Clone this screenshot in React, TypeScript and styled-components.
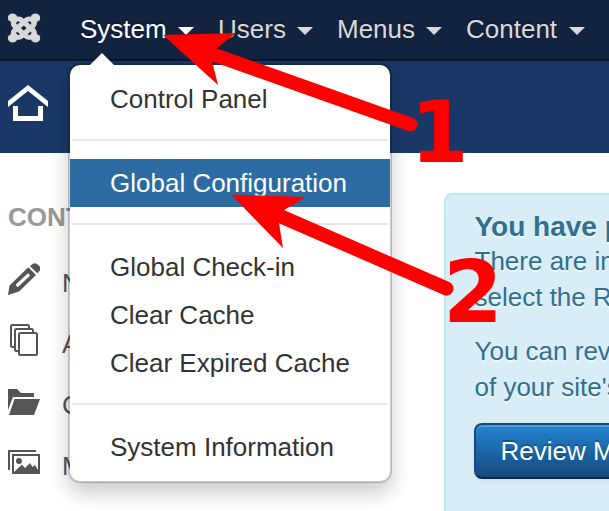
import React from 'react';
import styled, { createGlobalStyle } from 'styled-components';
import { FaJoomla } from 'react-icons/fa';

const GlobalStyle = createGlobalStyle`
  * { box-sizing: border-box; }
  body {
    margin: 0;
    background: #fff;
    overflow: hidden;
    font: 26px/36px "Liberation Sans", Arial, sans-serif;
    color: #333;
  }
`;

const Page = styled.div`
  position: relative;
  width: 609px;
  height: 511px;
  overflow: hidden;
  white-space: nowrap;
`;

const NavBar = styled.nav`
  display: flex;
  align-items: flex-start;
  height: 61px;
  padding-left: 8px;
  background: #12233f;
  border-bottom: 2px solid #0b182c;
`;

const Logo = styled.div`
  width: 32px;
  height: 32px;
  margin: 12px 40px 0 0;
  color: #d9d9d9;
  svg {
    display: block;
    overflow: visible;
    transform: scaleX(1.12);
    stroke-width: 15px;
  }
`;

const NavItem = styled.a<{ $open?: boolean; $width: number }>`
  position: relative;
  display: flex;
  flex: none;
  width: ${(p) => p.$width}px;
  padding-top: 11px;
  color: ${(p) => (p.$open ? '#fff' : '#d9d9d9')};
  text-shadow: 0 -2px 0 rgba(0, 0, 0, 0.25);
`;

const Caret = styled.span<{ $gap?: number }>`
  width: 0;
  height: 0;
  margin: 16px 0 0 ${(p) => p.$gap ?? 11}px;
  border: 8px solid transparent;
  border-top-color: currentColor;
  border-bottom: 0;
`;

const Menu = styled.div`
  position: absolute;
  z-index: 2;
  top: 63px;
  left: -12px;
  width: 324px;
  padding: 10px 0;
  background: #fff;
  background-clip: padding-box;
  border: 2px solid rgba(0, 0, 0, 0.2);
  border-radius: 12px;
  box-shadow: 0 10px 20px rgba(0, 0, 0, 0.2);
  text-shadow: none;

  &::before {
    content: '';
    position: absolute;
    top: -12px;
    left: 20px;
    border: 12px solid transparent;
    border-top: 0;
    border-bottom-color: #fff;
  }
`;

const MenuItem = styled.div<{ $active?: boolean }>`
  height: 48px;
  padding: 6px 40px;
  color: ${(p) => (p.$active ? '#fff' : '#333')};
  background: ${(p) => (p.$active ? '#2d6ca2' : 'transparent')};
`;

const Divider = styled.div`
  height: 2px;
  margin: 16px 2px 18px;
  background: #e5e5e5;
`;

const SubHeader = styled.header`
  height: 92px;
  padding: 24px 0 0 8px;
  background: #1a3867;
  svg { display: block; }
`;

const Body = styled.main`
  display: flex;
  padding-top: 40px;
`;

const Sidebar = styled.aside`
  flex: none;
  width: 444px;
  padding: 6px 0 0 8px;
`;

const SidebarTitle = styled.h2`
  margin: 0 0 28px;
  font-size: 26px;
  line-height: 36px;
  color: #999;
`;

const SideLink = styled.div`
  display: flex;
  height: 61px;
  color: #555;
  svg { flex: none; margin-right: 22px; }
`;

const LinkText = styled.span`
  padding-top: 2px;
`;

const Alert = styled.section`
  flex: none;
  width: 700px;
  height: 330px;
  padding: 14px 28px;
  color: #31708f;
  background: #d9edf7;
  border: 2px solid #bce8f1;
  border-radius: 8px;
  text-shadow: 0 2px 0 rgba(255, 255, 255, 0.5);
`;

const AlertTitle = styled.h4`
  margin: 0 0 -2px 0.5px;
  font-size: 28px;
  line-height: 36px;
`;

const Paragraph = styled.p`
  margin: 0 0 18px 0.5px;
`;

const Button = styled.button`
  display: block;
  height: 56px;
  padding: 0 24.5px;
  font: inherit;
  color: #fff;
  background: linear-gradient(#2384d3, #15497c);
  border: 2px solid;
  border-color: #15497c #15497c #0b2744;
  border-radius: 8px;
  box-shadow: inset 0 2px 0 rgba(255, 255, 255, 0.2), 0 2px 4px rgba(0, 0, 0, 0.05);
  text-shadow: 0 -2px 0 rgba(0, 0, 0, 0.25);
`;

const Annotations = styled.svg`
  position: absolute;
  z-index: 5;
  top: 0;
  left: 0;
  fill: #f00;
  stroke: #f00;
`;

const StepNumber = styled.text`
  stroke: none;
  font: bold 86px "DejaVu Sans", sans-serif;
`;

const HomeIcon = () => (
  <svg width="40" height="36" viewBox="0 0 40 36" fill="#fff">
    <path d="M20 0 40 16V22L20 6 0 22V16Z" />
    <path d="M5 21h5v10h20V21h5v15H5Z" />
  </svg>
);

const PencilIcon = () => (
  <svg width="32" height="34" viewBox="0 0 32 34" fill="#555">
    <path d="M23 2.3Q26.5-1.4 30.3 2T31 8.5L29.3 10.2 22 3.2Z" />
    <path d="M20.3 4.3 28 12 11 28.5 0 32 1.5 22.5ZM20 10.2 7.5 21.7 9.7 24.2 22.2 12.5Z" fillRule="evenodd" />
  </svg>
);

const CopyIcon = () => (
  <svg width="32" height="34" viewBox="0 0 32 34" fill="#fff" stroke="#555" strokeWidth="2">
    <rect x="3" y="1" width="18" height="22" rx="1.5" />
    <rect x="7" y="5" width="18" height="22" rx="1.5" />
    <rect x="11" y="9" width="18" height="22" rx="1.5" />
  </svg>
);

const FolderIcon = () => (
  <svg width="32" height="34" viewBox="0 0 32 34" fill="#555">
    <path d="M0 4H9L13 8H26V12H5L0 25Z" />
    <path d="M6.5 14H32L26 30H1Z" />
  </svg>
);

const PictureIcon = () => (
  <svg width="32" height="34" viewBox="0 0 32 34" fill="#555">
    <path d="M0 4H28V6H2V24H0Z" />
    <path d="M4 8H32V28H4ZM6 10V26L14 18.5 17 22 22 17 24.5 21 27 19 30 24V10Z" fillRule="evenodd" />
    <circle cx="11" cy="15" r="3" />
  </svg>
);

export default function App() {
  return (
    <>
      <GlobalStyle />
      <Page>
        <NavBar>
          <Logo><FaJoomla size={32} /></Logo>
          <NavItem $open $width={138}>
            System <Caret />
            <Menu>
              <MenuItem>Control Panel</MenuItem>
              <Divider />
              <MenuItem $active>Global Configuration</MenuItem>
              <Divider />
              <MenuItem>Global Check-in</MenuItem>
              <MenuItem>Clear Cache</MenuItem>
              <MenuItem>Clear Expired Cache</MenuItem>
              <Divider />
              <MenuItem>System Information</MenuItem>
            </Menu>
          </NavItem>
          <NavItem $width={119}>Users <Caret /></NavItem>
          <NavItem $width={129}>Menus <Caret /></NavItem>
          <NavItem $width={140}>Content <Caret $gap={11.5} /></NavItem>
        </NavBar>
        <SubHeader><HomeIcon /></SubHeader>
        <Body>
          <Sidebar>
            <SidebarTitle>CONTENT</SidebarTitle>
            <SideLink><PencilIcon /><LinkText>New Article</LinkText></SideLink>
            <SideLink><CopyIcon /><LinkText>Articles</LinkText></SideLink>
            <SideLink><FolderIcon /><LinkText>Categories</LinkText></SideLink>
            <SideLink><PictureIcon /><LinkText>Media</LinkText></SideLink>
          </Sidebar>
          <Alert>
            <AlertTitle>You have post-installation messages</AlertTitle>
            <Paragraph>
              There are important messages<br />select the Review Messages button
            </Paragraph>
            <Paragraph>
              You can review the messages<br />of your site's Administrator
            </Paragraph>
            <Button>Review Messages</Button>
          </Alert>
        </Body>
        <Annotations width="609" height="511" viewBox="0 0 609 511">
          <path stroke="none" d="M163 35 236 33 217 48 212 61 218 85Z" />
          <path d="M212 54 410.5 124.5" strokeWidth="14" strokeLinecap="round" />
          <path stroke="none" d="M231 194.5 306 197 284 210 279 223 283 248Z" />
          <path d="M280 216 446.5 288.5" strokeWidth="14" strokeLinecap="round" />
          <StepNumber transform="translate(410.5 162) scale(0.97 1)">1</StepNumber>
          <StepNumber x="443" y="322">2</StepNumber>
        </Annotations>
      </Page>
    </>
  );
}
